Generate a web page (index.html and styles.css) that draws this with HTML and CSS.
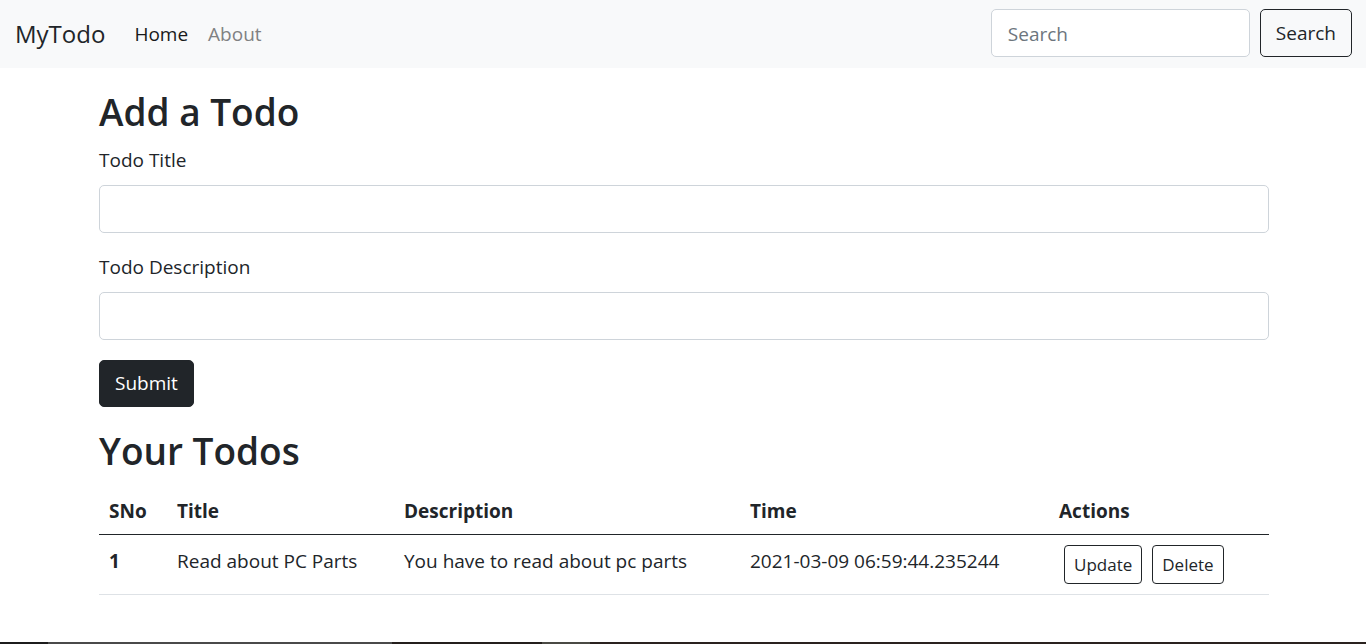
FILE: index.html
```html
<!DOCTYPE html>
<html lang="en">
<head>
<meta charset="utf-8">
<meta name="viewport" content="width=device-width, initial-scale=1">
<title>MyTodo</title>
<link rel="stylesheet" href="styles.css">
</head>
<body>
<header class="navbar">
  <a class="brand" href="#">MyTodo</a>
  <nav class="nav">
    <a class="nav-link active" href="#" aria-current="page">Home</a>
    <a class="nav-link" href="#">About</a>
  </nav>
  <form class="search">
    <input class="control search-input" type="search" placeholder="Search" aria-label="Search">
    <button class="btn btn-outline" type="submit">Search</button>
  </form>
</header>
<main class="container">
  <h2 class="heading">Add a Todo</h2>
  <form class="todo-form">
    <div class="field">
      <label class="label" for="title">Todo Title</label>
      <input class="control" type="text" id="title">
    </div>
    <div class="field">
      <label class="label" for="desc">Todo Description</label>
      <input class="control" type="text" id="desc">
    </div>
    <button class="btn btn-dark" type="submit">Submit</button>
  </form>
  <h2 class="heading">Your Todos</h2>
  <table class="table">
    <colgroup>
      <col class="col-sno"><col class="col-title"><col class="col-desc"><col class="col-time"><col>
    </colgroup>
    <thead>
      <tr><th scope="col">SNo</th><th scope="col">Title</th><th scope="col">Description</th><th scope="col">Time</th><th scope="col">Actions</th></tr>
    </thead>
    <tbody>
      <tr>
        <th scope="row">1</th>
        <td>Read about PC Parts</td>
        <td>You have to read about pc parts</td>
        <td>2021-03-09 06:59:44.235244</td>
        <td class="actions-cell"><div class="actions"><button class="btn btn-outline btn-small" type="button">Update</button><button class="btn btn-outline btn-small" type="button">Delete</button></div></td>
      </tr>
    </tbody>
  </table>
</main>
<footer class="bottom-edge"></footer>
</body>
</html>
```
FILE: styles.css
```css
*, *::before, *::after { box-sizing: border-box; }
body {
  display: flex;
  flex-direction: column;
  min-height: 100vh;
  margin: 0;
  background: #fff;
  color: #212529;
  font-family: "Segoe UI", "Open Sans", "Noto Sans", sans-serif;
  font-size: 19px;
  line-height: 29px;
}
a { text-decoration: none; }
.navbar {
  display: flex;
  align-items: center;
  padding: 9px 14px 11px 15px;
  background: #f8f9fa;
}
.brand { margin-right: 29px; color: #212529; font-size: 24px; }
.nav { display: flex; flex: 1; gap: 20px; padding-top: 2px; }
.nav-link { color: #808182; }
.nav-link.active { color: #19191a; }
.search { display: flex; gap: 10px; }
.control {
  display: block;
  width: 100%;
  height: 48px;
  padding: 9px 16px 8px;
  border: 1px solid #ced4da;
  border-radius: 5px;
  background: #fff;
  color: #212529;
  font: inherit;
}
.search .search-input { width: 259px; }
.control::placeholder { color: #6c757d; opacity: 1; }
.btn {
  padding: 8px 15px;
  border: 1px solid #212529;
  border-radius: 5px;
  font: inherit;
}
.btn-outline { background: transparent; color: #212529; }
.btn-dark { background: #212529; color: #fff; }
.btn-small { padding: 4px 9px; border-radius: 4px; font-size: 17px; }
.container { width: 100%; padding: 20px 97px 0 99px; }
.heading {
  margin: 0 0 10px;
  font-size: 37px;
  font-weight: 600;
  line-height: 48px;
}
.todo-form { margin-bottom: 20px; }
.field { margin-bottom: 20px; }
.label { display: block; margin-bottom: 10px; }
.table { width: 100%; border-collapse: collapse; table-layout: fixed; }
.table th, .table td { padding: 12px 10px 8px; text-align: left; vertical-align: top; white-space: nowrap; }
.table th { font-weight: 700; }
.table .actions-cell { padding: 10px; }
.table thead tr { border-bottom: 1px solid #212529; }
.table tbody tr { border-bottom: 1px solid #dee2e6; }
.col-sno { width: 68px; }
.col-title { width: 227px; }
.col-desc { width: 346px; }
.col-time { width: 309px; }
.actions { display: flex; gap: 10px; padding-left: 5px; }
.bottom-edge {
  height: 2px;
  margin-top: auto;
  background: linear-gradient(to right, #1c1c1c 48px, #4a4a4a 48px 392px, #241f1c 392px 542px, #4a4a44 542px 590px, #2a221f 590px);
}
```
